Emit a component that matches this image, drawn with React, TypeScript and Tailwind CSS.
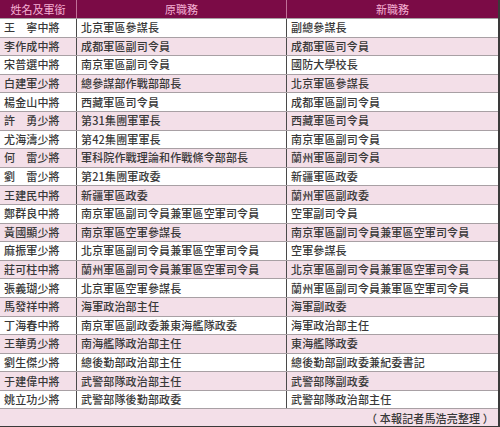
const ROWS: [string, string, string][] = [
  ["王　寧中將", "北京軍區參謀長", "副總參謀長"],
  ["李作成中將", "成都軍區副司令員", "成都軍區司令員"],
  ["宋普選中將", "南京軍區副司令員", "國防大學校長"],
  ["白建軍少將", "總參謀部作戰部部長", "北京軍區參謀長"],
  ["楊金山中將", "西藏軍區司令員", "成都軍區副司令員"],
  ["許　勇少將", "第31集團軍軍長", "西藏軍區司令員"],
  ["尤海濤少將", "第42集團軍軍長", "南京軍區副司令員"],
  ["何　雷少將", "軍科院作戰理論和作戰條令部部長", "蘭州軍區副司令員"],
  ["劉　雷少將", "第21集團軍政委", "新疆軍區政委"],
  ["王建民中將", "新疆軍區政委", "蘭州軍區副政委"],
  ["鄭群良中將", "南京軍區副司令員兼軍區空軍司令員", "空軍副司令員"],
  ["黃國顯少將", "南京軍區空軍參謀長", "南京軍區副司令員兼軍區空軍司令員"],
  ["麻振軍少將", "北京軍區副司令員兼軍區空軍司令員", "空軍參謀長"],
  ["莊可柱中將", "蘭州軍區副司令員兼軍區空軍司令員", "北京軍區副司令員兼軍區空軍司令員"],
  ["張義瑚少將", "北京軍區空軍參謀長", "蘭州軍區副司令員兼軍區空軍司令員"],
  ["馬發祥中將", "海軍政治部主任", "海軍副政委"],
  ["丁海春中將", "南京軍區副政委兼東海艦隊政委", "海軍政治部主任"],
  ["王華勇少將", "南海艦隊政治部主任", "東海艦隊政委"],
  ["劉生傑少將", "總後勤部政治部主任", "總後勤部副政委兼紀委書記"],
  ["于建偉中將", "武警部隊政治部主任", "武警部隊副政委"],
  ["姚立功少將", "武警部隊後勤部政委", "武警部隊政治部主任"],
];

const font = { fontFamily: '"Noto Sans CJK TC", "Noto Sans CJK SC", sans-serif' };

export default function App() {
  return (
    <div className="w-[500px] h-[427px] bg-white overflow-hidden" style={font}>
      <div className="border-r-2 border-b-2 border-[#3a3a3a]">
        <div className="grid grid-cols-[77px_210px_1fr] h-[18px] bg-[#7b0b46] text-[11px] text-[#f6b0d4]">
          <div className="flex items-center justify-center border-r border-[#c07098]">姓名及軍銜</div>
          <div className="flex items-center justify-center border-r border-[#c07098]">原職務</div>
          <div className="flex items-center justify-center">新職務</div>
        </div>
        {ROWS.map(([name, oldPost, newPost], i) => (
          <div
            key={name}
            className={`grid grid-cols-[77px_210px_1fr] h-[18.6px] border-t border-[#a8a0a4] text-[11px] font-medium leading-none tracking-[0.15px] text-[#383838] ${
              i % 2 === 1 ? "bg-[#f3dfe8]" : "bg-white"
            }`}
          >
            <div className="flex items-center pl-1 border-r border-[#4a4a4a] whitespace-nowrap">{name}</div>
            <div className="flex items-center pl-1 border-r border-[#4a4a4a] whitespace-nowrap">{oldPost}</div>
            <div className="flex items-center pl-1 whitespace-nowrap">{newPost}</div>
          </div>
        ))}
        <div className="h-[18px] border-t border-[#a8a0a4] bg-[#f3dfe8] flex items-center justify-end pr-1 text-[11px] font-medium text-[#383838] tracking-[0.15px] whitespace-pre">
          （ 本報記者馬浩亮整理 ）
        </div>
      </div>
    </div>
  );
}
